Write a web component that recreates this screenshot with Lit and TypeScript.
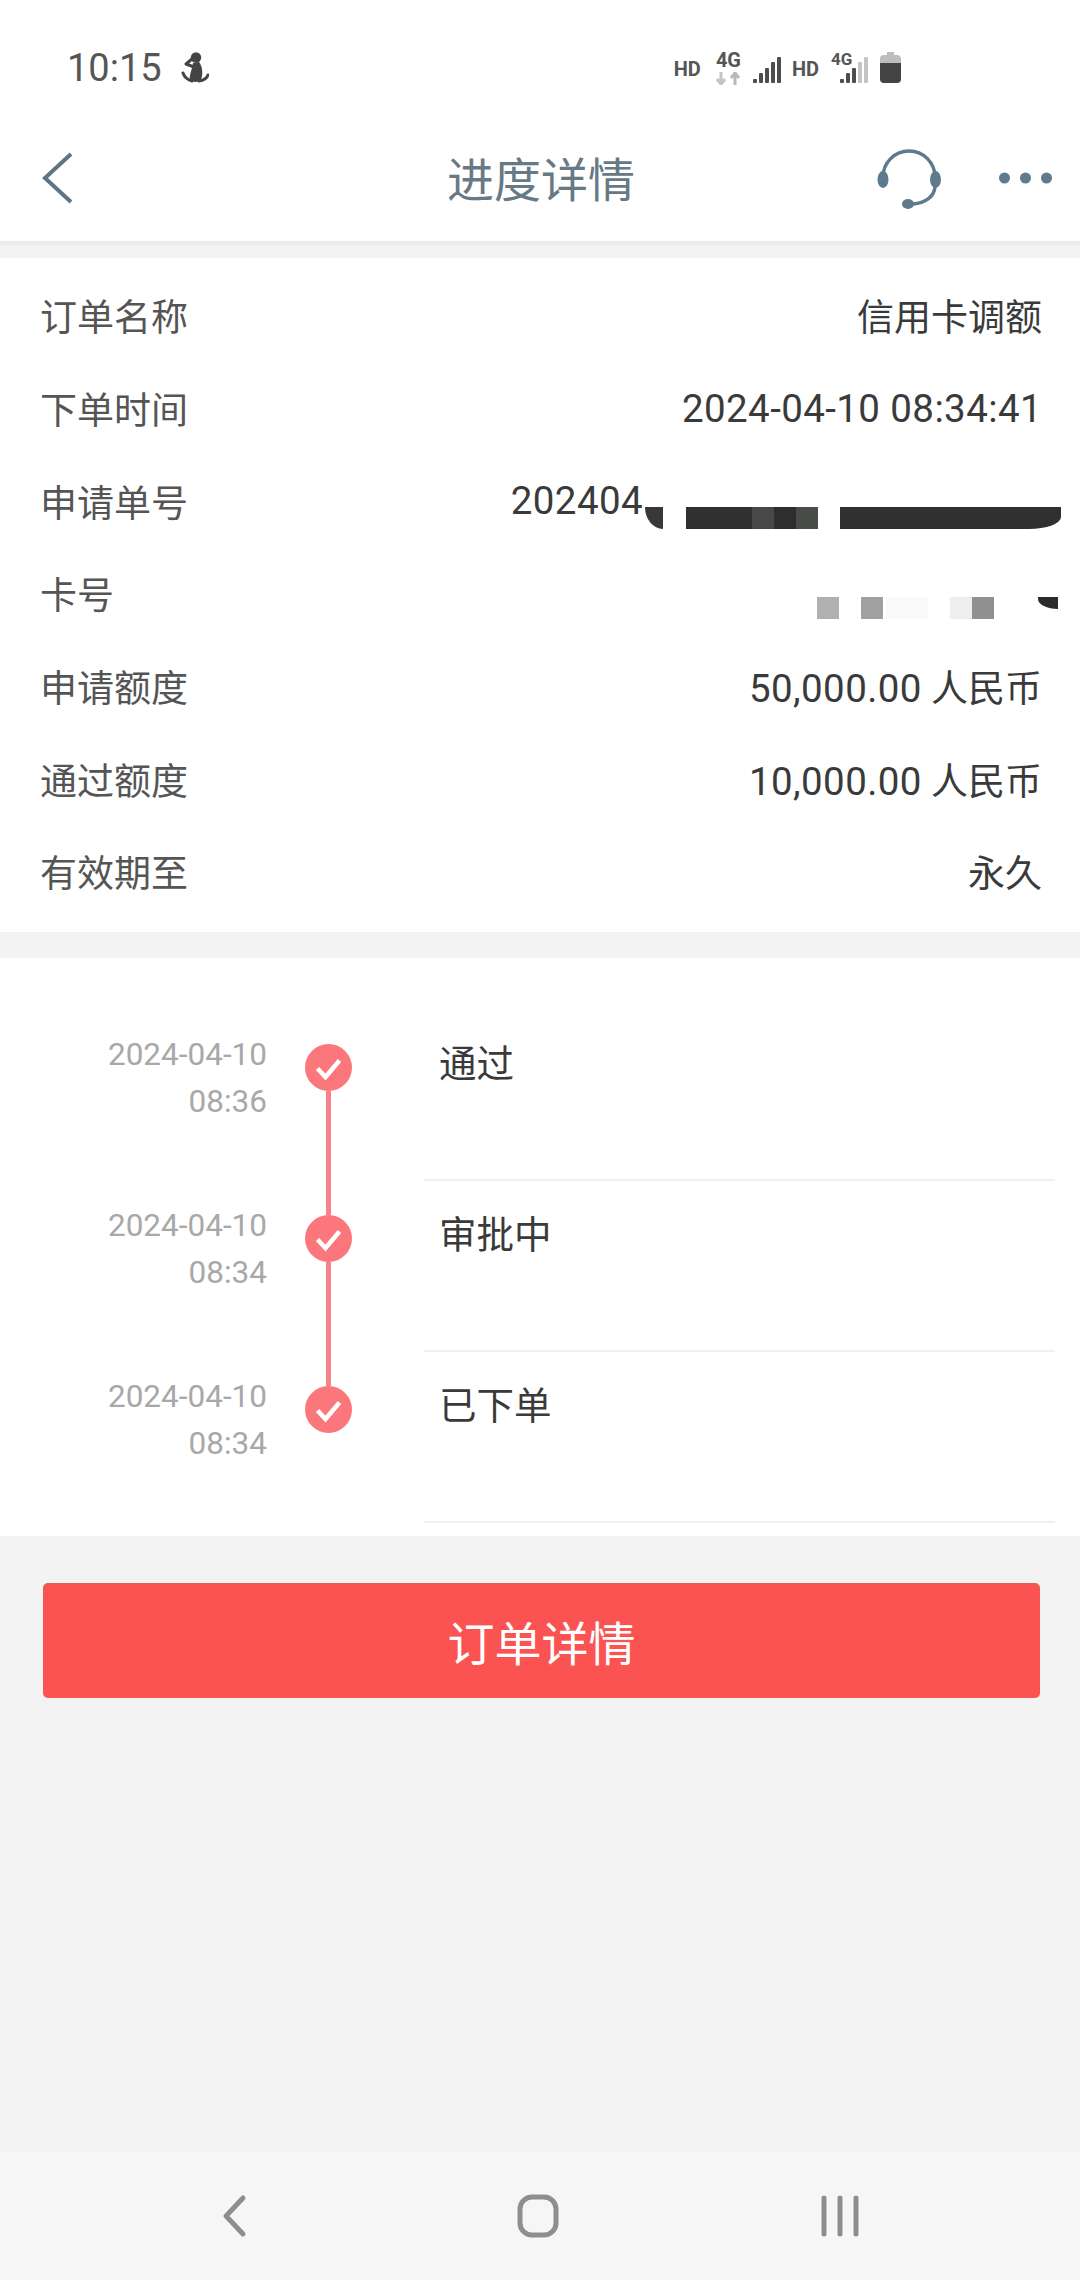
import { LitElement, html, css, svg } from "lit";
import { customElement } from "lit/decorators.js";

const infoRows = [
  { label: "订单名称", text: "信用卡调额" },
  { label: "下单时间", num: "2024-04-10 08:34:41" },
  { label: "申请单号", num: "202404", order: true },
  { label: "卡号", card: true },
  { label: "申请额度", num: "50,000.00", text: " 人民币" },
  { label: "通过额度", num: "10,000.00", text: " 人民币" },
  { label: "有效期至", text: "永久" },
];

// redacted blocks in the reference: [left, width, colour, class]
const orderMask: [number, number, string, string][] = [
  [604, 18, "#3a363a", "cut_left"],
  [645, 66, "#303030", ""],
  [711, 22, "#484848", ""],
  [733, 22, "#2e2e2e", ""],
  [755, 22, "#4a4c4a", ""],
  [799, 221, "#303030", "cut_right"],
];
const cardMask: [number, number, string, string][] = [
  [776, 22, "#b0b0b0", ""],
  [820, 22, "#a0a0a0", ""],
  [845, 42, "#f9faf9", ""],
  [909, 22, "#eeeeee", ""],
  [931, 22, "#909090", ""],
  [997, 20, "#2c2c2c", "cut_tip"],
];

const steps = [
  { date: "2024-04-10", time: "08:36", title: "通过" },
  { date: "2024-04-10", time: "08:34", title: "审批中" },
  { date: "2024-04-10", time: "08:34", title: "已下单" },
];

const signal = (on: number) => {
  const bars = [4, 10, 15, 21, 26];
  return svg`${bars.map(
    (h, i) => svg`<rect x=${i * 6} y=${26 - h} width="4" height=${h} rx="1" fill=${i < on ? "#4d4d4d" : "#c4c4c4"}></rect>`
  )}`;
};

@customElement("app-root")
export class AppRoot extends LitElement {
  static styles = css`
    :host {
      display: flex;
      flex-direction: column;
      min-height: 2280px;
      background: #f3f3f3;
      font-family: Roboto, "Noto Sans CJK SC", sans-serif;
      color: #3a3a3a;
    }

    /* status bar */
    .status {
      height: 115px;
      background: #fff;
      display: flex;
      align-items: flex-start;
      padding: 46px 0 0 67px;
      box-sizing: border-box;
    }
    .status_time {
      font-size: 38px;
      line-height: 44px;
      color: #555;
    }
    .status_person {
      margin: 6px 0 0 19px;
    }
    .status_icons {
      margin-left: auto;
      padding-right: 179px;
      display: flex;
      align-items: flex-start;
    }
    .hd {
      font-size: 20px;
      line-height: 20px;
      font-weight: 700;
      color: #555;
      margin-top: 13px;
    }
    .hd_second {
      margin-left: 11px;
    }
    .net {
      display: flex;
      flex-direction: column;
      margin: 4px 0 0 15px;
      width: 25px;
      font-size: 20px;
      line-height: 20px;
      font-weight: 700;
      color: #555;
    }
    .net_arrows {
      margin-top: 2px;
    }
    .net_small {
      margin: 5px 0 0 12px;
      width: 21px;
      font-size: 17px;
      line-height: 17px;
      font-weight: 700;
      color: #555;
    }
    .bars {
      margin: 11px 0 0 12px;
    }
    .bars_over {
      margin-left: -12px;
    }
    .battery {
      margin: 6px 0 0 12px;
    }

    /* header */
    .header {
      height: 126px;
      background: #fff;
      display: flex;
      align-items: center;
      border-bottom: 4px solid #ebebeb;
    }
    .header_back {
      margin-left: 42px;
    }
    .header_title {
      flex: 1;
      text-align: center;
      font-size: 47px;
      color: #677985;
      margin-left: -74px;
      margin-right: -207px;
      padding-bottom: 3px;
    }
    .header_tools {
      display: flex;
      align-items: center;
      gap: 54px;
      padding-right: 28px;
      margin-left: auto;
    }

    /* info card */
    .info {
      margin-top: 13px;
      background: #fff;
      padding: 11px 38px 14px 40px;
    }
    .info_row {
      height: 92.7px;
      display: flex;
      align-items: center;
      justify-content: space-between;
      font-size: 37px;
      position: relative;
    }
    .info_label {
      color: #555;
    }
    .info_num {
      font-size: 38.5px;
      letter-spacing: 0.4px;
    }
    .info_value_left {
      margin-right: 399px;
    }
    .mask {
      position: absolute;
      top: 53px;
      left: 1px;
    }
    .mask_card {
      top: 50px;
    }
    .mask span {
      position: absolute;
      top: 0;
      height: 22px;
    }
    .mask .cut_left {
      border-bottom-left-radius: 18px 22px;
    }
    .mask .cut_right {
      border-bottom-right-radius: 32px 12px;
    }
    .mask .cut_tip {
      height: 12px;
      border-bottom-left-radius: 20px 10px;
    }

    /* timeline */
    .timeline {
      margin-top: 26px;
      background: #fff;
      padding: 52px 25px 13px 0;
    }
    .step {
      height: 171px;
      display: grid;
      grid-template-columns: 267px 124px 1fr;
    }
    .step_when {
      padding-top: 21px;
      text-align: right;
      font-size: 31.5px;
      line-height: 47px;
      color: #a8a8a8;
    }
    .step_track {
      display: flex;
      flex-direction: column;
      align-items: center;
      padding-top: 34px;
    }
    .step_dot {
      width: 47px;
      height: 47px;
      flex: none;
      margin-left: -1px;
    }
    .step_line {
      width: 5px;
      flex: 1;
      background: #f4848a;
      margin-bottom: -34px;
      margin-left: -1px;
    }
    .step_body {
      margin-left: 33px;
      padding: 32.5px 0 0 15px;
      border-bottom: 2px solid #f0f0f0;
      font-size: 37.5px;
      line-height: 44px;
    }

    /* button */
    .action {
      margin: 47px 40px 0 43px;
      height: 115px;
      background: #fb5252;
      border-radius: 5px;
      border-top: 1px solid #d86565;
      box-sizing: border-box;
      display: flex;
      align-items: center;
      justify-content: center;
      color: #fff;
      font-size: 47px;
    }

    /* nav bar */
    .nav {
      margin-top: auto;
      height: 128px;
      background: #f6f6f6;
      display: grid;
      grid-template-columns: 34px 44px 44px;
      column-gap: 264px;
      align-items: start;
      padding: 42px 0 0 218px;
      box-sizing: border-box;
    }
    .nav_recent {
      margin-left: -6px;
    }
  `;

  renderMask(blocks: [number, number, string, string][], extra = "") {
    return html`<div class="mask ${extra}">
      ${blocks.map(
        ([left, width, colour, cls]) =>
          html`<span class=${cls} style="left:${left}px;width:${width}px;background:${colour}"></span>`
      )}
    </div>`;
  }

  renderValue(r: (typeof infoRows)[number]) {
    if (r.card) {
      return html`<span></span>${this.renderMask(cardMask, "mask_card")}`;
    }
    if (r.order) {
      return html`<span class="info_num info_value_left">${r.num}</span>${this.renderMask(orderMask)}`;
    }
    return html`<span>${r.num ? html`<span class="info_num">${r.num}</span>` : ""}${r.text}</span>`;
  }

  render() {
    return html`
      <div class="status">
        <span class="status_time">10:15</span>
        <svg class="status_person" width="28" height="32" viewBox="0 0 28 32">
          <circle cx="15" cy="5.5" r="5.2" fill="#444"></circle>
          <path d="M11 7 L5 12 L13 15" fill="none" stroke="#444" stroke-width="3" stroke-linejoin="round"></path>
          <path d="M12 11 L18 10 C22 15 22 23 20 28 Q14 32 9 28 C8 23 11 18 12 11 Z" fill="#444"></path>
          <path d="M2 21 Q4 27 11 29 M27 23 Q25 28 18 29" fill="none" stroke="#444" stroke-width="3" stroke-linecap="round"></path>
        </svg>
        <div class="status_icons">
          <span class="hd">HD</span>
          <div class="net">
            <span>4G</span>
            <svg class="net_arrows" width="25" height="13" viewBox="0 0 25 13">
              <path d="M5 0 V11 M1 7 L5 12 L9 7" fill="none" stroke="#c4c4c4" stroke-width="3"></path>
              <path d="M19 13 V2 M15 6 L19 1 L23 6" fill="none" stroke="#b8b8b8" stroke-width="3"></path>
            </svg>
          </div>
          <svg class="bars" width="28" height="26" viewBox="0 0 28 26">${signal(5)}</svg>
          <span class="hd hd_second">HD</span>
          <span class="net_small">4G</span>
          <svg class="bars bars_over" width="28" height="26" viewBox="0 0 28 26">${signal(3)}</svg>
          <svg class="battery" width="21" height="31" viewBox="0 0 21 31">
            <path d="M7 0 H14 V3 H17 Q21 3 21 7 V11 H0 V7 Q0 3 4 3 H7 Z" fill="#bdbdbd"></path>
            <path d="M0 11 H21 V27 Q21 31 17 31 H4 Q0 31 0 27 Z" fill="#444"></path>
          </svg>
        </div>
      </div>

      <div class="header">
        <svg class="header_back" width="32" height="54" viewBox="0 0 32 54">
          <path d="M29 3 L3 27 L29 51" fill="none" stroke="#5f7583" stroke-width="4"></path>
        </svg>
        <div class="header_title">进度详情</div>
        <div class="header_tools">
          <svg width="70" height="70" viewBox="0 0 70 70">
            <path d="M8 34 A26 26 0 0 1 60 34" fill="none" stroke="#5f7a8c" stroke-width="3.5"></path>
            <ellipse cx="8" cy="36.5" rx="5.5" ry="8.5" fill="#5f7a8c"></ellipse>
            <ellipse cx="60.5" cy="36.5" rx="5.5" ry="8.5" fill="#5f7a8c"></ellipse>
            <path d="M60 44 C59 54 50 60 38 61" fill="none" stroke="#5f7a8c" stroke-width="3.5"></path>
            <ellipse cx="33" cy="61" rx="6" ry="5" fill="#5f7a8c"></ellipse>
          </svg>
          <svg width="53" height="12" viewBox="0 0 53 12">
            <circle cx="5.5" cy="6" r="5.5" fill="#5f7a8c"></circle>
            <circle cx="26.5" cy="6" r="5.5" fill="#5f7a8c"></circle>
            <circle cx="47.5" cy="6" r="5.5" fill="#5f7a8c"></circle>
          </svg>
        </div>
      </div>

      <div class="info">
        ${infoRows.map(
          (r) => html`<div class="info_row">
            <span class="info_label">${r.label}</span>
            ${this.renderValue(r)}
          </div>`
        )}
      </div>

      <div class="timeline">
        ${steps.map(
          (s, i) => html`<div class="step">
            <div class="step_when">${s.date}<br />${s.time}</div>
            <div class="step_track">
              <svg class="step_dot" viewBox="0 0 47 47">
                <circle cx="23.5" cy="23.5" r="23.5" fill="#fb777b"></circle>
                <path d="M12.5 24.5 L20.5 33 L34.5 16.5" fill="none" stroke="#fff" stroke-width="4.5"></path>
              </svg>
              ${i < steps.length - 1 ? html`<div class="step_line"></div>` : ""}
            </div>
            <div class="step_body">${s.title}</div>
          </div>`
        )}
      </div>

      <div class="action">订单详情</div>

      <div class="nav">
        <svg width="34" height="44" viewBox="0 0 34 44">
          <path d="M25 4 L8 22 L25 40" fill="none" stroke="#8e8e8e" stroke-width="5" stroke-linecap="round" stroke-linejoin="round"></path>
        </svg>
        <svg width="44" height="44" viewBox="0 0 44 44">
          <rect x="4" y="3" width="36" height="38" rx="12" fill="none" stroke="#8e8e8e" stroke-width="5"></rect>
        </svg>
        <svg class="nav_recent" width="44" height="44" viewBox="0 0 44 44">
          <path d="M6 4 V40 M22 4 V40 M38 4 V40" fill="none" stroke="#8e8e8e" stroke-width="5" stroke-linecap="round"></path>
        </svg>
      </div>
    `;
  }
}
